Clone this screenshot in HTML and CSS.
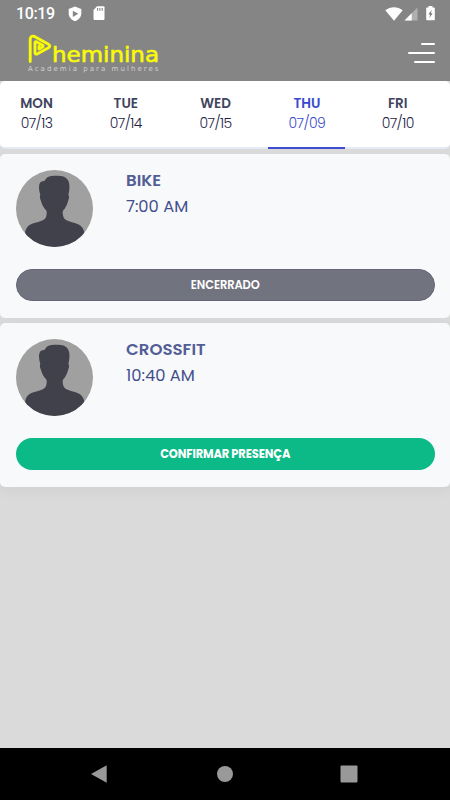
FILE: index.html
```html
<!DOCTYPE html>
<html lang="pt-BR">
<head>
  <meta charset="UTF-8" />
  <meta name="viewport" content="width=device-width, initial-scale=1.0"/>
  <title>Pheminina</title>
  <link rel="stylesheet" href="styles.css">
</head>
<body>
  <header class="header">
    <div class="status-bar">
      <span class="clock">10:19</span>
      <svg class="shield" width="14" height="16" viewBox="0 0 14 16">
        <path fill="#fff" d="M7 0.5 L13.3 3 V7.5 C13.3 11 10.5 14 7 15.3 C3.5 14 0.7 11 0.7 7.5 V3 Z"/>
        <path fill="#858585" d="M4.8 4.8 L10.3 7.8 L4.8 10.9 Z"/>
      </svg>
      <svg class="sd-card" width="12" height="15" viewBox="0 0 12 15">
        <path fill="#fff" d="M4 0.3 H10.5 Q11.5 0.3 11.5 1.3 V13 Q11.5 14 10.5 14 H1.5 Q0.5 14 0.5 13 V4 Z"/>
        <path stroke="#858585" stroke-width="1.1" d="M4.6 2 V4.8 M6.9 2 V4.8 M9.2 2 V4.8"/>
      </svg>
      <div class="signals">
        <svg width="18" height="14" viewBox="0 0 18 14">
          <path fill="#fff" d="M0.3 3.2 C5.5 -0.9 12.5 -0.9 17.7 3.2 L9 13.8 Z"/>
        </svg>
        <svg class="mobile" width="14" height="14" viewBox="0 0 14 14">
          <path fill="#b0b0b0" d="M13.5 0.5 V13.5 H0.5 Z"/>
          <path fill="#fff" d="M7.7 6.3 V13.5 H0.5 Z"/>
        </svg>
        <svg class="battery" width="9" height="15" viewBox="0 0 9 15">
          <path fill="#fff" d="M2.5 0 H6.5 V1.5 H8 Q8.8 1.5 8.8 2.3 V13.5 Q8.8 14.3 8 14.3 H1 Q0.2 14.3 0.2 13.5 V2.3 Q0.2 1.5 1 1.5 H2.5 Z"/>
          <path fill="#777" d="M5.8 3.8 L2.4 8.4 H4.2 L3.4 12 L6.6 7.2 H4.9 Z"/>
        </svg>
      </div>
    </div>
    <div class="navbar">
      <svg class="logo" width="134" height="42" viewBox="0 0 134 42">
        <path class="logo-mark" d="M3.2 28.5 V6.5 Q3.2 2.2 7.5 3.4 L21.5 11.2 Q24 13 21.5 14.8 L10.5 20.8 Q8 21.7 8 19.5 V10 Q8 8 9.8 8.9 L15.3 12 Q17 13.2 15.3 14.2 L12 16 V13.5"/>
        <text class="logo-name" x="25" y="29" textLength="107" lengthAdjust="spacingAndGlyphs">heminina</text>
        <text class="logo-tagline" x="1" y="38.2" textLength="130.5">Academia para mulheres</text>
      </svg>
      <div class="menu">
        <span class="line short"></span>
        <span class="line"></span>
        <span class="line medium"></span>
      </div>
    </div>
  </header>

  <nav class="days">
    <div class="day"><b>MON</b><span>07/13</span></div>
    <div class="day"><b>TUE</b><span>07/14</span></div>
    <div class="day"><b>WED</b><span>07/15</span></div>
    <div class="day active"><b>THU</b><span>07/09</span></div>
    <div class="day"><b>FRI</b><span>07/10</span></div>
  </nav>

  <main class="classes">
    <section class="card">
      <div class="info">
        <svg class="avatar" viewBox="0 0 77 77">
          <path id="person" d="M30.7 43 C31 41 30 40 28.7 38.7 C26.5 36 25.5 33 24.7 30.3 C23.6 28 23.8 26 24.3 24.7 C22.5 20 22.5 14 24.7 12 C26 10.7 27.5 11.4 28.7 10.7 C30 9 30 8 31.5 7.2 C35 5.5 44 5.5 48 6.7 C52 8.2 53.8 12 53.4 18 C53.3 21 52.9 23 52.4 24.7 C53.2 26 53.3 28 52.3 30.3 C51.7 33 50.5 36 48.7 38.7 C47 40.5 46.5 41.5 46.7 43 C47 46.5 47.5 48.5 50 50 C54 52 58 52.5 61.5 54 C65 55.5 67.5 58 68.2 62 V78 H9.2 V62 C10 58 12 55.5 15.5 54 C19 52.5 23.5 52 27.3 50 C30 48.5 30.5 46.5 30.7 43 Z"/>
        </svg>
        <div class="details">
          <h3>BIKE</h3>
          <p>7:00 AM</p>
        </div>
      </div>
      <button class="btn closed">ENCERRADO</button>
    </section>

    <section class="card">
      <div class="info">
        <svg class="avatar" viewBox="0 0 77 77">
          <use href="#person"/>
        </svg>
        <div class="details">
          <h3>CROSSFIT</h3>
          <p>10:40 AM</p>
        </div>
      </div>
      <button class="btn confirm">CONFIRMAR PRESENÇA</button>
    </section>
  </main>

  <footer class="system-nav">
    <svg width="18" height="20" viewBox="0 0 18 20">
      <path d="M0 10 L15.7 1.2 V18.8 Z"/>
    </svg>
    <svg width="18" height="18" viewBox="0 0 18 18">
      <circle cx="9" cy="9" r="8"/>
    </svg>
    <svg width="18" height="18" viewBox="0 0 18 18">
      <rect x="0.5" y="0.5" width="17" height="17" rx="1"/>
    </svg>
  </footer>
</body>
</html>
```

FILE: styles.css
```css
* {
  box-sizing: border-box;
}

body {
  display: flex;
  flex-direction: column;
  height: 800px;
  margin: 0;
  font-family: Poppins, Inter, sans-serif;
  background: #dadada;
  overflow: hidden;
}

svg {
  display: block;
}

/* header */
.header {
  height: 81px;
  background: #858585;
  flex-shrink: 0;
}

.status-bar {
  display: flex;
  height: 27px;
  padding: 0 15px 0 16px;
  align-items: center;
}

.clock {
  width: 52px;
  font: 500 16px/27px Roboto, sans-serif;
  letter-spacing: -0.4px;
  color: #fff;
}

.sd-card {
  margin-left: 11px;
}

.signals {
  display: flex;
  align-items: center;
  margin-left: auto;
}

.mobile {
  margin-left: 1px;
}

.battery {
  margin-left: 8px;
}

.navbar {
  display: flex;
  justify-content: space-between;
  padding: 6px 15px 0 27px;
}

.logo-mark {
  fill: none;
  stroke: #f8fa08;
  stroke-width: 2.9;
  stroke-linecap: round;
  stroke-linejoin: round;
}

.logo-name {
  font: 21px "DejaVu Sans", sans-serif;
  fill: #f8fa08;
  stroke: #f8fa08;
  stroke-width: 0.6;
}

.logo-tagline {
  font: 7px "DejaVu Sans", sans-serif;
  fill: #cfcfcf;
}

.menu {
  display: flex;
  flex-direction: column;
  align-items: flex-end;
  gap: 7px;
  padding-top: 10px;
}

.line {
  width: 27px;
  height: 2px;
  border-radius: 1px;
  background: #fff;
}

.line.short {
  width: 14px;
}

.line.medium {
  width: 21px;
}

/* days */
.days {
  display: grid;
  grid-template-columns: 73px 74px 74px 77px 73px;
  column-gap: 15.8px;
  height: 68px;
  border-bottom: 2px solid #e6eaf4;
  border-radius: 5px;
  background: #fff;
  flex-shrink: 0;
}

.day {
  display: flex;
  flex-direction: column;
  height: 68px;
  padding-top: 13px;
  align-items: center;
  font-size: 13.5px;
  line-height: 19px;
  color: #3f4460;
  border-bottom: 2px solid transparent;
}

.day b {
  font-weight: 600;
}

.day span {
  font-size: 14px;
  font-weight: 300;
  line-height: 20px;
  letter-spacing: -0.6px;
  color: #1d2144;
}

.day.active,
.day.active span {
  color: #3849d0;
}

.day.active {
  border-bottom-color: #3d4fcf;
}

/* classes */
.card {
  height: 164px;
  margin-top: 5px;
  padding: 16px 15.5px 0 16px;
  border-radius: 5px;
  background: #f8f9fb;
}

.card + .card {
  box-shadow: 0 3px 14px rgba(0,0,0,0.05);
}

.info {
  display: flex;
  height: 99px;
}

.avatar {
  width: 77px;
  height: 77px;
  border-radius: 50%;
  background: #a0a0a0;
  fill: #41414b;
}

.details {
  margin-left: 33px;
  color: #535d96;
}

.details h3 {
  margin: 0;
  font-size: 16.6px;
  font-weight: 600;
  line-height: 22px;
}

.details p {
  margin: 4px 0 0;
  font-size: 16.3px;
  line-height: 21px;
  color: #434e8c;
}

.btn {
  display: block;
  width: 100%;
  height: 32px;
  padding: 1px 0 0;
  border: none;
  border-radius: 16px;
  font-family: inherit;
  font-size: 11.5px;
  font-weight: 600;
  color: #fff;
}

.closed {
  background: #71737f;
  border: 1px solid #666579;
  letter-spacing: -0.1px;
}

.confirm {
  background: #0bba87;
  font-weight: 700;
  letter-spacing: -0.15px;
}

/* android buttons */
.system-nav {
  display: flex;
  justify-content: space-between;
  align-items: center;
  height: 52px;
  margin-top: auto;
  padding: 0 92px 0 91px;
  background: #000;
  fill: #999;
}
```
